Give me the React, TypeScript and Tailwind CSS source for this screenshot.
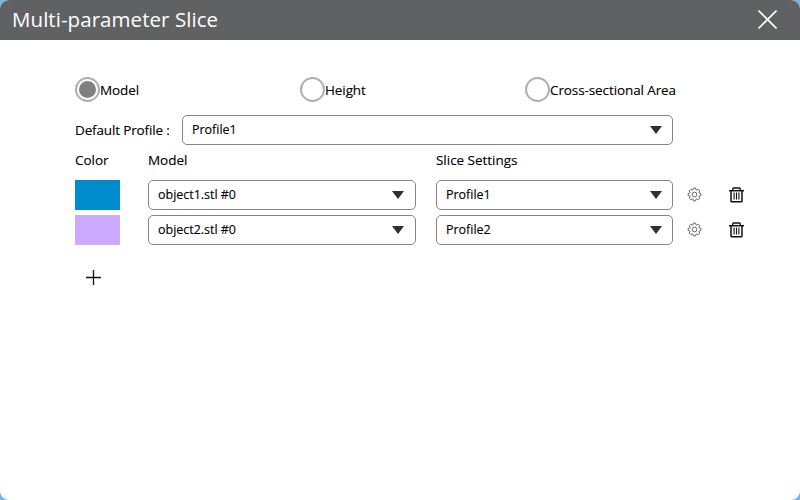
import { useState } from "react";

function Radio({ label, checked, onSelect }: { label: string; checked: boolean; onSelect: () => void }) {
  return (
    <button type="button" role="radio" aria-checked={checked} onClick={onSelect} className="flex w-[225px] items-center">
      <span className="flex size-[25px] shrink-0 items-center justify-center rounded-full border-2 border-[#b0b0b0] bg-white">
        {checked && <span className="size-[17px] rounded-full bg-[#808080]" />}
      </span>
      <span className="whitespace-nowrap pt-0.5 tracking-[-0.1px]">{label}</span>
    </button>
  );
}

function Select({ value, width }: { value: string; width: string }) {
  return (
    <div className={`flex h-[30px] items-center justify-between rounded-[5px] border border-[#858585] bg-white pl-[9px] ${width}`}>
      <span className="pt-px text-[12.5px] leading-none tracking-[-0.02px]">{value}</span>
      <svg width="12" height="8" viewBox="0 0 12 8">
        <path d="M0 0H12L6 8Z" fill="#303030" />
      </svg>
    </div>
  );
}

function GearIcon() {
  return (
    <svg width="15" height="15" viewBox="0 0 16 16" fill="none" stroke="#606060" strokeWidth="1" strokeLinejoin="round">
      <path d="M6.8 1.2H9.2L9.5 2.9L10.5 3.3L11.9 2.4L13.6 4.1L12.7 5.5L13.1 6.5L14.8 6.8V9.2L13.1 9.5L12.7 10.5L13.6 11.9L11.9 13.6L10.5 12.7L9.5 13.1L9.2 14.8H6.8L6.5 13.1L5.5 12.7L4.1 13.6L2.4 11.9L3.3 10.5L2.9 9.5L1.2 9.2V6.8L2.9 6.5L3.3 5.5L2.4 4.1L4.1 2.4L5.5 3.3L6.5 2.9Z" />
      <circle cx="8" cy="8" r="2.5" />
    </svg>
  );
}

function TrashIcon() {
  return (
    <svg width="15" height="16" viewBox="0 0 15 16" fill="none" stroke="#101010">
      <path d="M3.7 3.5V2Q3.7 1 4.7 1H10.3Q11.3 1 11.3 2V3.5" strokeWidth="1.3" />
      <path d="M0 3.7H15" strokeWidth="1.5" />
      <path d="M2 4V14Q2 14.8 2.8 14.8H12.2Q13 14.8 13 14V4" strokeWidth="1.5" />
      <path d="M5.1 5.5V12.5M7.5 5.5V12.5M9.9 5.5V12.5" strokeWidth="1.1" />
    </svg>
  );
}

const rows = [
  { color: "bg-[#008bcd]", model: "object1.stl #0", profile: "Profile1" },
  { color: "bg-[#ccaaff]", model: "object2.stl #0", profile: "Profile2" },
];

const modes = ["Model", "Height", "Cross-sectional Area"];

export default function App() {
  const [mode, setMode] = useState("Model");
  return (
    <div className="h-[500px] w-[800px] overflow-hidden bg-[#78b4e8] font-['Open_Sans','Noto_Sans',sans-serif] text-[13.5px] font-normal text-black">
      <div className="flex h-full flex-col overflow-hidden rounded-[9px] bg-white">
        <header className="flex h-10 shrink-0 items-center justify-between bg-[#606163] pl-3 pr-[23px] text-white">
          <h1 className="pb-0.5 text-[20.5px] font-normal leading-[38px] tracking-[0.06px]">Multi-parameter Slice</h1>
          <button type="button" aria-label="Close" className="pb-px">
            <svg width="19" height="19" viewBox="0 0 19 19" stroke="white" strokeWidth="1.6">
              <path d="M.5 .5L18.5 18.5M18.5 .5L.5 18.5" />
            </svg>
          </button>
        </header>
        <main className="pl-[75px] pt-[37px] [-webkit-text-stroke:0.12px_black]">
          <div role="radiogroup" className="flex h-[25px]">
            {modes.map((m) => (
              <Radio key={m} label={m} checked={mode === m} onSelect={() => setMode(m)} />
            ))}
          </div>
          <div className="mt-[13px] flex h-[30px] items-center">
            <span className="w-[107px] whitespace-nowrap pt-px tracking-[-0.15px]">Default Profile :</span>
            <Select value="Profile1" width="w-[491px] pr-[10.5px]" />
          </div>
          <div className="flex h-[35px] items-center pb-[5px] tracking-[-0.03px]">
            <span className="w-[73px]">Color</span>
            <span className="w-[288px]">Model</span>
            <span>Slice Settings</span>
          </div>
          <div className="flex flex-col gap-[5px]">
            {rows.map((row) => (
              <div key={row.model} className="flex h-[30px] items-center">
                <span className={`mr-7 h-[30px] w-[45px] ${row.color}`} />
                <Select value={row.model} width="w-[268px] pr-[11px]" />
                <span className="w-5" />
                <Select value={row.profile} width="w-[237px] pr-[10.5px]" />
                <button type="button" aria-label="Settings" className="ml-3.5 pb-px"><GearIcon /></button>
                <button type="button" aria-label="Delete" className="ml-[27px] pb-px"><TrashIcon /></button>
              </div>
            ))}
          </div>
          <button type="button" aria-label="Add" className="ml-[11px] mt-[25px] block">
            <svg width="15" height="15" viewBox="0 0 15 15" stroke="#101010" strokeWidth="1.3">
              <path d="M0 7.5H15M7.5 0V15" />
            </svg>
          </button>
        </main>
      </div>
    </div>
  );
}
